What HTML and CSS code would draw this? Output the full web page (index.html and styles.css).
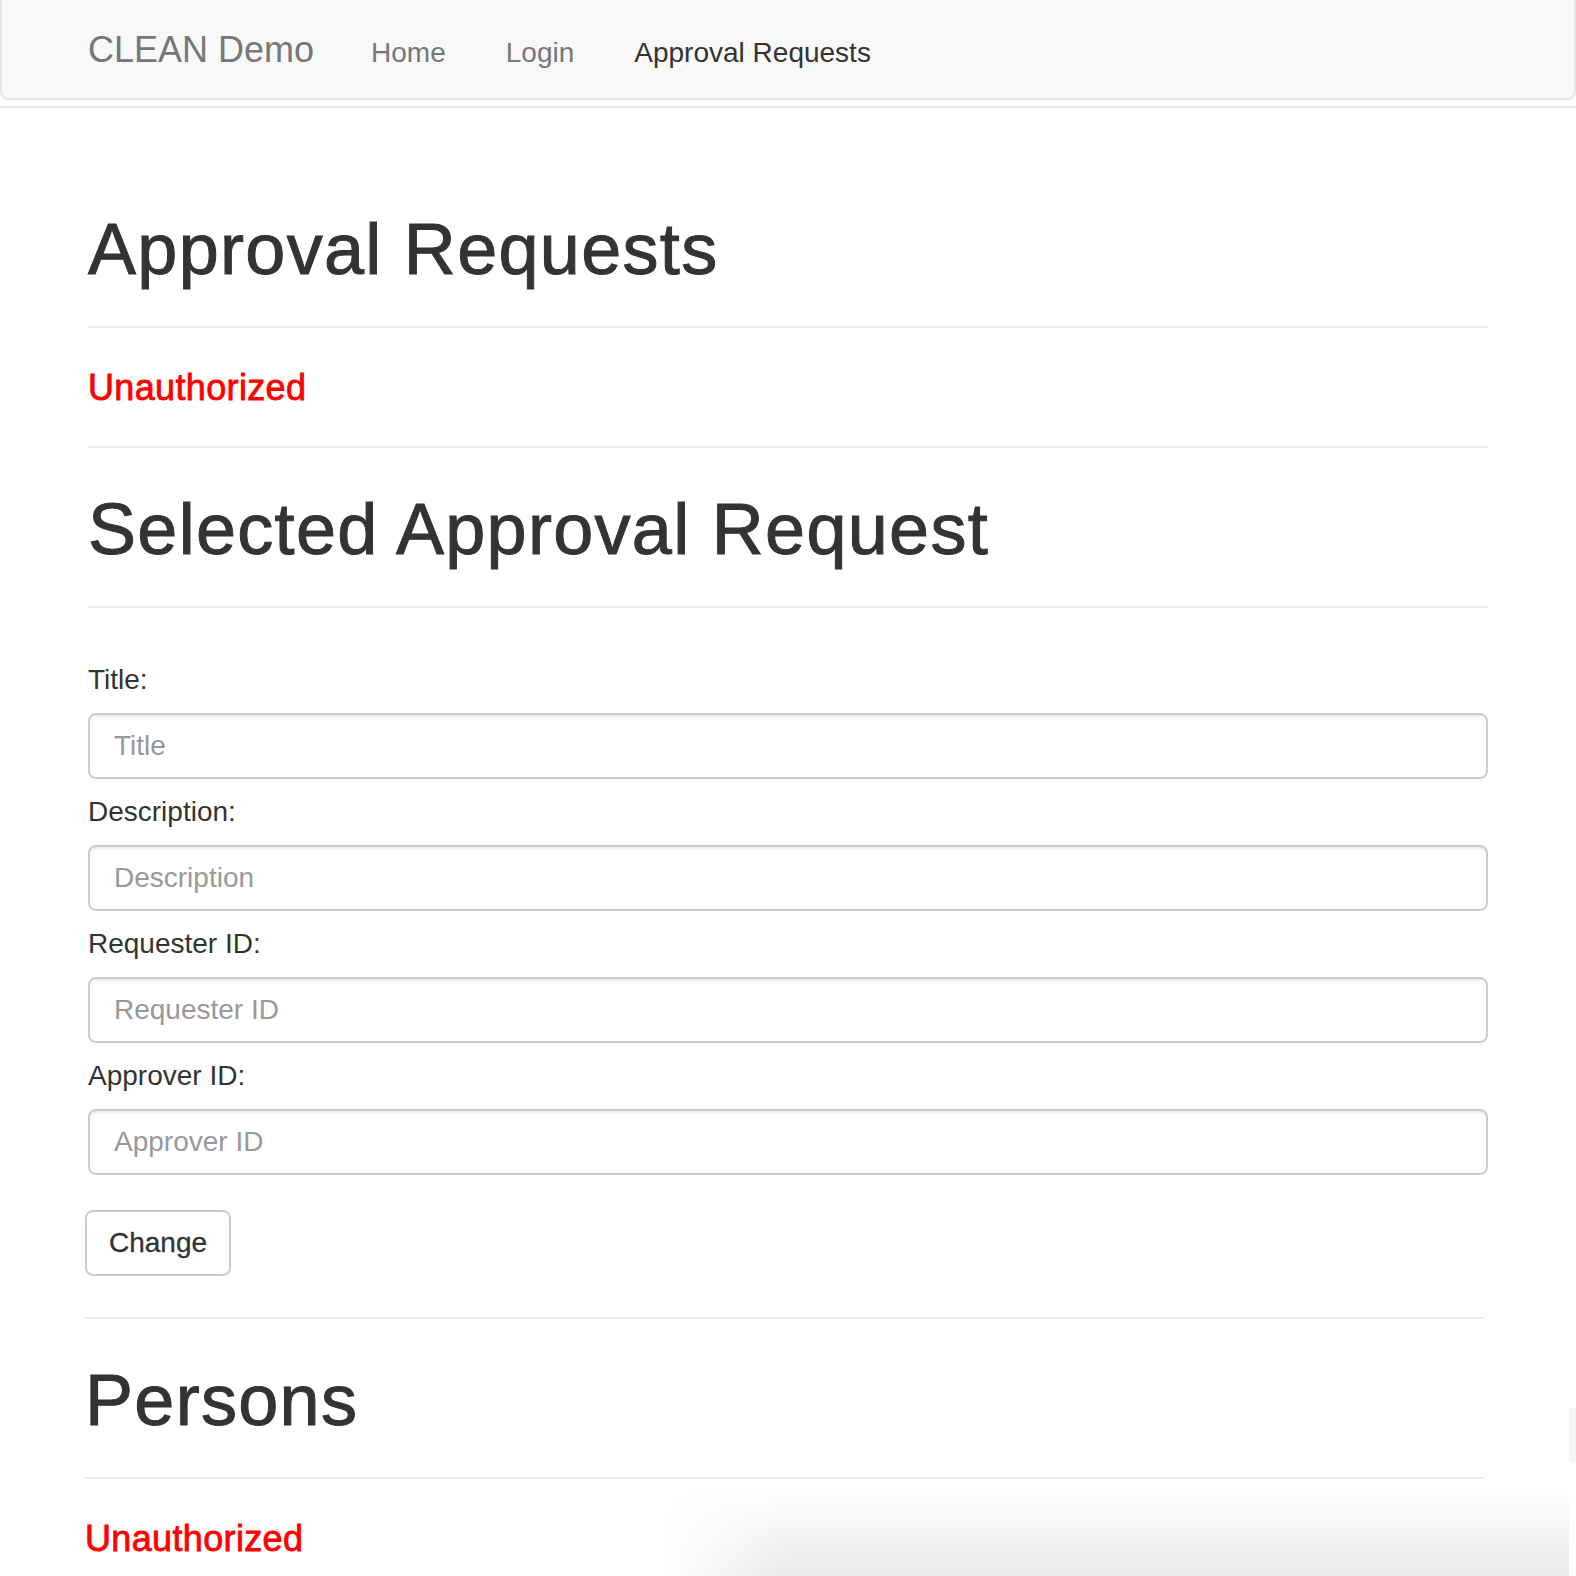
FILE: index.html
```html
<!DOCTYPE html>
<html lang="en">
<head>
<meta charset="utf-8">
<title>CLEAN Demo</title>
<link rel="stylesheet" href="styles.css">
</head>
<body>
<nav class="navbar">
  <a class="brand" href="#">CLEAN Demo</a>
  <ul class="nav">
    <li><a href="#">Home</a></li>
    <li><a href="#">Login</a></li>
    <li class="active"><a href="#">Approval Requests</a></li>
  </ul>
</nav>
<div class="topline"></div>
<main class="container">
  <section class="upper">
    <div class="page-header first"><h1>Approval Requests</h1></div>
    <p class="error">Unauthorized</p>
    <hr class="rule">
    <div class="page-header"><h1>Selected Approval Request</h1></div>
    <form class="form">
      <div class="field"><label for="t">Title:</label><input id="t" type="text" placeholder="Title"></div>
      <div class="field"><label for="d">Description:</label><input id="d" type="text" placeholder="Description"></div>
      <div class="field"><label for="r">Requester ID:</label><input id="r" type="text" placeholder="Requester ID"></div>
      <div class="field"><label for="a">Approver ID:</label><input id="a" type="text" placeholder="Approver ID"></div>
    </form>
  </section>
  <section class="lower">
    <button class="btn" type="button">Change</button>
    <hr class="rule rule-lower">
    <div class="page-header"><h1>Persons</h1></div>
    <p class="error">Unauthorized</p>
  </section>
</main>
<div class="shade"></div>
<div class="edge-tab"></div>
</body>
</html>
```

FILE: styles.css
```css
html {
  overflow: hidden;
}
body {
  margin: 0;
  font-family: "Liberation Sans", Arial, Helvetica, sans-serif;
  color: #333;
  background: #fff;
  position: relative;
  min-height: 1576px;
}
a {
  text-decoration: none;
}

/* navbar */
.navbar {
  box-sizing: border-box;
  height: 100px;
  background: #f8f8f8;
  border: 2px solid #e7e7e7;
  border-top: 0;
  border-radius: 0 0 8px 8px;
  display: flex;
  align-items: baseline;
  padding: 30px 0 0 86px;
}
.brand {
  font-size: 36px;
  line-height: 40px;
  color: #777;
  margin-right: 27px;
}
.nav {
  list-style: none;
  margin: 0;
  padding: 0;
  display: flex;
  align-items: baseline;
}
.nav a {
  display: block;
  font-size: 28px;
  line-height: 40px;
  padding: 0 30px;
  color: #777;
}
.nav .active a {
  color: #333;
}
.topline {
  margin-top: 6px;
  height: 2px;
  background: #e6e6e6;
}

/* content */
.container {
  margin-left: 88px;
  width: 1400px;
}
.page-header {
  margin-top: 41px;
  padding-bottom: 37px;
  border-bottom: 2px solid #eee;
}
.page-header.first {
  margin-top: 101px;
}
h1 {
  margin: 0;
  font-size: 72px;
  line-height: 80px;
  font-weight: 500;
  letter-spacing: 1.3px;
  -webkit-text-stroke: 1px #333;
  color: #333;
}
.error {
  margin: 40px 0 38px;
  font-size: 36px;
  line-height: 40px;
  color: #ff0000;
  letter-spacing: 0.35px;
  -webkit-text-stroke: 0.8px #ff0000;
}
.rule {
  border: 0;
  border-top: 2px solid #eee;
  margin: 0;
  height: 0;
}

/* form */
.form {
  padding-top: 39px;
}
.field label {
  display: block;
  font-size: 28px;
  line-height: 40px;
  margin: 13px 0;
  color: #333;
}
.field input {
  display: block;
  box-sizing: border-box;
  width: 1400px;
  height: 66px;
  margin: 0;
  padding: 0 24px;
  font-family: inherit;
  font-size: 28px;
  color: #555;
  background: #fff;
  border: 2px solid #ccc;
  border-radius: 8px;
  box-shadow: inset 0 2px 2px rgba(0, 0, 0, 0.075);
  outline: none;
}
.field input::placeholder {
  color: #999;
}

/* lower part, slightly offset in the capture */
.lower {
  margin-left: -3px;
  width: 1400px;
}
.btn {
  display: block;
  box-sizing: border-box;
  margin-top: 35px;
  height: 66px;
  padding: 0 22px;
  font-family: inherit;
  font-size: 28px;
  color: #333;
  background: #fff;
  border: 2px solid #ccc;
  border-radius: 8px;
  -webkit-text-stroke: 0.3px #333;
}
.rule-lower {
  margin-top: 41px;
}
.lower .error {
  margin-bottom: 0;
}

/* capture artifacts at the bottom right */
.shade {
  position: absolute;
  left: 660px;
  top: 1486px;
  width: 909px;
  height: 90px;
  background: linear-gradient(to bottom, rgba(0, 0, 0, 0), rgba(0, 0, 0, 0.085));
  -webkit-mask-image: linear-gradient(to right, transparent 0, #000 130px);
  mask-image: linear-gradient(to right, transparent 0, #000 130px);
  pointer-events: none;
}
.edge-tab {
  position: absolute;
  left: 1569px;
  top: 1408px;
  width: 7px;
  height: 54px;
  background: #f5f5f5;
  pointer-events: none;
}
```
